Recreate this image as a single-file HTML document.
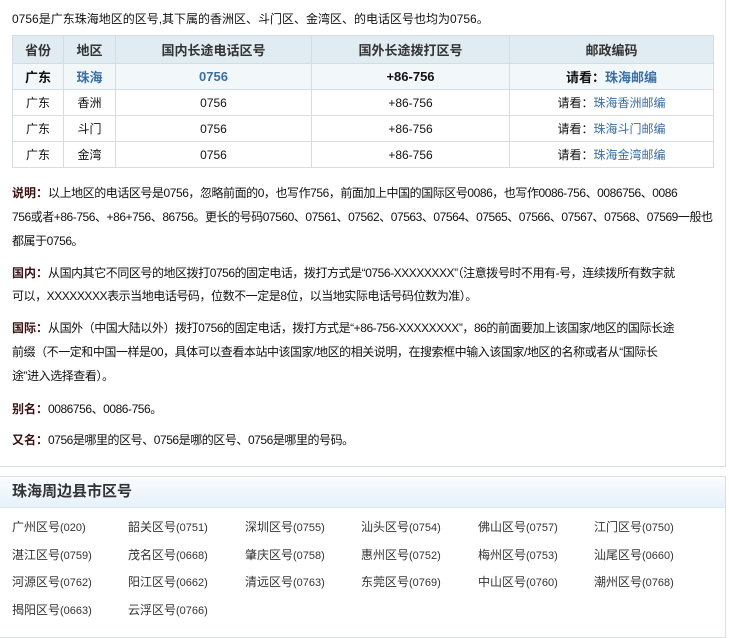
<!DOCTYPE html>
<html><head><meta charset="utf-8"><style>
body{margin:0;width:729px;height:628px;background:#fff;position:relative;overflow:hidden;font-family:"Liberation Sans","SimSun","Noto Sans CJK SC",sans-serif;font-size:12px;color:#111}
.top{position:absolute;left:-1px;top:-2px;width:725px;height:467px;border:1px solid #d8e0e6;border-left:1px solid #ccc}
.intro{position:absolute;left:12px;top:10px}
table{position:absolute;left:12px;top:35px;border-collapse:collapse;width:701px;table-layout:fixed}
td,th{border:1px solid #d5dde4;text-align:center;padding:0;font-size:12px}
th{background:#e1ebf2;height:27px;color:#333;font-weight:bold;font-size:13px}
tr.r1 td{background:#f2f7fa;font-weight:bold;height:25px;font-size:13px}
td{height:25px}
.l{color:#3a6ea5}
.p{position:absolute;left:12px;line-height:24px;white-space:nowrap;letter-spacing:-0.45px}
.p b{color:#3a1010;font-size:12px;letter-spacing:0}
.bot{position:absolute;left:-1px;top:476px;width:725px;height:160px;border:1px solid #d8e0e6}
.hd{height:30px;background:linear-gradient(#fbfdff,#e6f1fa);border-bottom:1px solid #e2ebf2;font-size:15px;font-weight:bold;color:#333;line-height:30px;padding-left:12px}
.g{position:absolute;white-space:nowrap;font-size:12px;color:#333}
.g span{font-size:11px}
</style></head><body>
<div class="top"></div>
<div class="intro">0756是广东珠海地区的区号,其下属的香洲区、斗门区、金湾区、的电话区号也均为0756。</div>
<table>
<colgroup><col style="width:51px"><col style="width:52px"><col style="width:196px"><col style="width:198px"><col style="width:204px"></colgroup>
<tr><th>省份</th><th>地区</th><th>国内长途电话区号</th><th>国外长途拨打区号</th><th>邮政编码</th></tr>
<tr class="r1"><td>广东</td><td class="l">珠海</td><td class="l">0756</td><td>+86-756</td><td>请看：<span class="l">珠海邮编</span></td></tr>
<tr><td>广东</td><td>香洲</td><td>0756</td><td>+86-756</td><td>请看：<span class="l">珠海香洲邮编</span></td></tr>
<tr><td>广东</td><td>斗门</td><td>0756</td><td>+86-756</td><td>请看：<span class="l">珠海斗门邮编</span></td></tr>
<tr><td>广东</td><td>金湾</td><td>0756</td><td>+86-756</td><td>请看：<span class="l">珠海金湾邮编</span></td></tr>
</table>
<div class="p" style="top:181px"><b>说明：</b>以上地区的电话区号是0756，忽略前面的0，也写作756，前面加上中国的国际区号0086，也写作0086-756、0086756、0086<br>756或者+86-756、+86+756、86756。更长的号码07560、07561、07562、07563、07564、07565、07566、07567、07568、07569一般也<br>都属于0756。</div>
<div class="p" style="top:262px;line-height:23px"><b>国内：</b>从国内其它不同区号的地区拨打0756的固定电话，拨打方式是“0756-XXXXXXXX”（注意拨号时不用有-号，连续拨所有数字就<br>可以，XXXXXXXX表示当地电话号码，位数不一定是8位，以当地实际电话号码位数为准）。</div>
<div class="p" style="top:316px"><b>国际：</b>从国外（中国大陆以外）拨打0756的固定电话，拨打方式是“+86-756-XXXXXXXX”，86的前面要加上该国家/地区的国际长途<br>前缀（不一定和中国一样是00，具体可以查看本站中该国家/地区的相关说明，在搜索框中输入该国家/地区的名称或者从“国际长<br>途”进入选择查看）。</div>
<div class="p" style="top:397px"><b>别名：</b>0086756、0086-756。</div>
<div class="p" style="top:428px"><b>又名：</b>0756是哪里的区号、0756是哪的区号、0756是哪里的号码。</div>
<div class="bot"><div class="hd">珠海周边县市区号</div></div>
<div class="g" style="left:12px;top:518px">广州区号<span>(020)</span></div>
<div class="g" style="left:128px;top:518px">韶关区号<span>(0751)</span></div>
<div class="g" style="left:245px;top:518px">深圳区号<span>(0755)</span></div>
<div class="g" style="left:361px;top:518px">汕头区号<span>(0754)</span></div>
<div class="g" style="left:478px;top:518px">佛山区号<span>(0757)</span></div>
<div class="g" style="left:594px;top:518px">江门区号<span>(0750)</span></div>
<div class="g" style="left:12px;top:546px">湛江区号<span>(0759)</span></div>
<div class="g" style="left:128px;top:546px">茂名区号<span>(0668)</span></div>
<div class="g" style="left:245px;top:546px">肇庆区号<span>(0758)</span></div>
<div class="g" style="left:361px;top:546px">惠州区号<span>(0752)</span></div>
<div class="g" style="left:478px;top:546px">梅州区号<span>(0753)</span></div>
<div class="g" style="left:594px;top:546px">汕尾区号<span>(0660)</span></div>
<div class="g" style="left:12px;top:573px">河源区号<span>(0762)</span></div>
<div class="g" style="left:128px;top:573px">阳江区号<span>(0662)</span></div>
<div class="g" style="left:245px;top:573px">清远区号<span>(0763)</span></div>
<div class="g" style="left:361px;top:573px">东莞区号<span>(0769)</span></div>
<div class="g" style="left:478px;top:573px">中山区号<span>(0760)</span></div>
<div class="g" style="left:594px;top:573px">潮州区号<span>(0768)</span></div>
<div class="g" style="left:12px;top:601px">揭阳区号<span>(0663)</span></div>
<div class="g" style="left:128px;top:601px">云浮区号<span>(0766)</span></div>
</body></html>
